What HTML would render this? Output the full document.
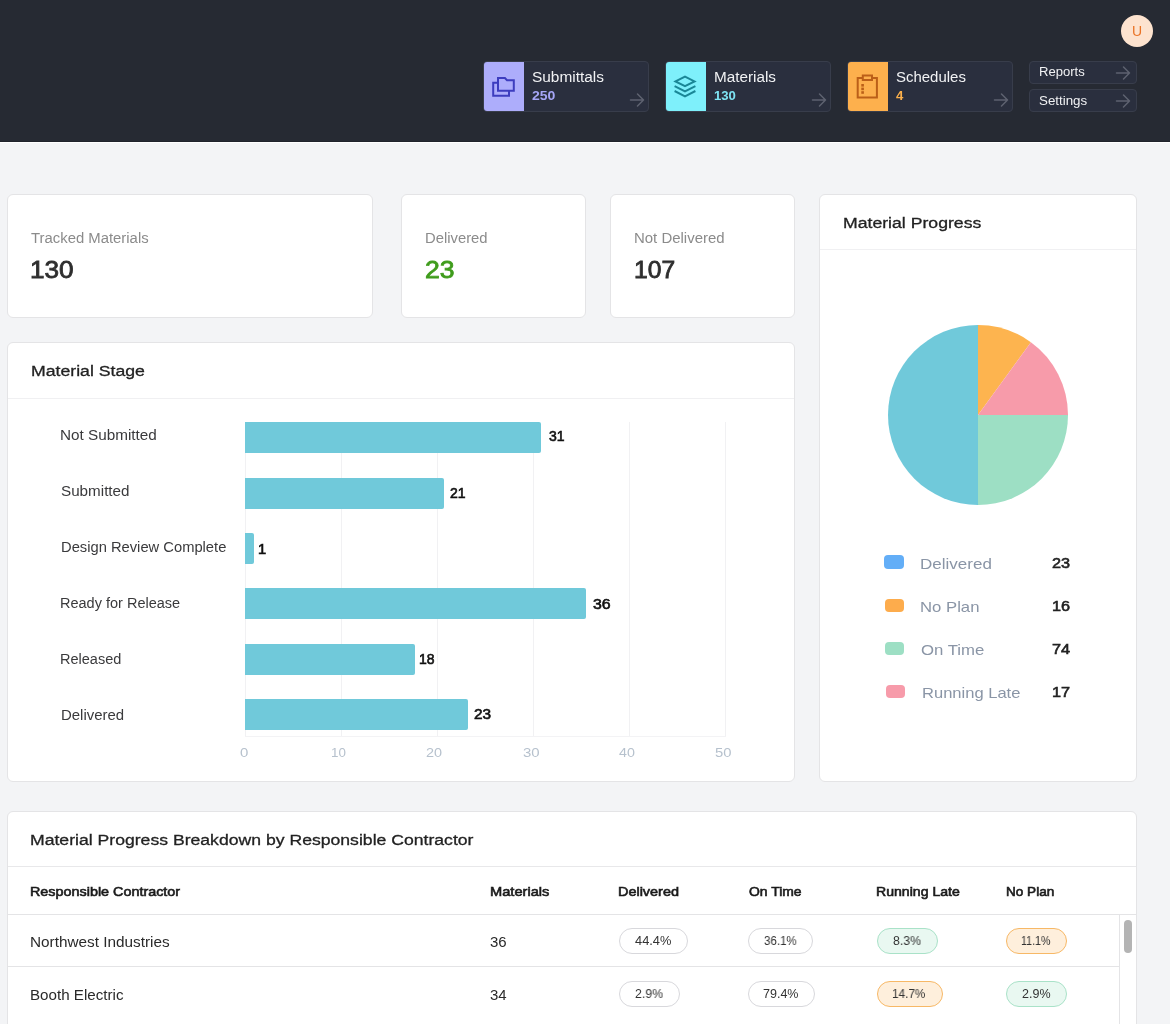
<!DOCTYPE html>
<html><head><meta charset="utf-8"><style>
html,body{margin:0;padding:0;}
body{width:1170px;height:1024px;overflow:hidden;position:relative;background:#f3f4f6;font-family:"Liberation Sans", sans-serif;}
.t{position:absolute;line-height:1;white-space:nowrap;will-change:transform;}
</style></head><body>
<div style="position:absolute;left:0px;top:0px;width:1170px;height:141px;box-sizing:border-box;background:#262a33;"></div>
<div style="position:absolute;left:0px;top:141px;width:1170px;height:1px;box-sizing:border-box;background:#20232b;"></div>
<div style="position:absolute;left:0px;top:142px;width:1170px;height:1px;box-sizing:border-box;background:#ffffff;"></div>
<div style="position:absolute;left:1121px;top:15px;width:32px;height:32px;box-sizing:border-box;background:#fde3cf;border-radius:50%;"></div>
<div id="t1" class="t" style="left:1137.00px;top:24.45px;font-size:14px;color:#ea7325;letter-spacing:0.000px;transform:translateX(-50%);">U</div>
<div style="position:absolute;left:483px;top:61px;width:166px;height:51px;box-sizing:border-box;background:#2a2f3e;border:1px solid #383d4b;border-radius:4px;"></div>
<div style="position:absolute;left:484px;top:62px;width:40px;height:49px;box-sizing:border-box;background:#adadfb;border-radius:3px 0 0 3px;"></div>
<svg style="position:absolute;left:484px;top:62px" width="40" height="49" viewBox="0 0 40 49"><path d="M14 16H20.9L23 18.2H29.8V28.7H14Z M14 20.7H9.2V33.7H25V28.7" fill="none" stroke="#3d3dbf" stroke-width="2" stroke-linejoin="miter"/></svg>
<div id="t2" class="t" style="left:531.94px;top:69.95px;font-size:14px;color:#f1f2f4;letter-spacing:0.000px;transform:scaleX(1.1007);transform-origin:0 0;">Submittals</div>
<div id="t3" class="t" style="left:531.63px;top:89.84px;font-size:12px;color:#a6a6f6;font-weight:700;letter-spacing:0.000px;transform:scaleX(1.1696);transform-origin:0 0;">250</div>
<svg style="position:absolute;left:629px;top:92px" width="16" height="16" viewBox="0 0 16 16"><path d="M1.5 8H14.5M8.5 2L14.5 8L8.5 14" fill="none" stroke="#5e6270" stroke-width="1.5" stroke-linecap="round" stroke-linejoin="round"/></svg>
<div style="position:absolute;left:665px;top:61px;width:166px;height:51px;box-sizing:border-box;background:#2a2f3e;border:1px solid #383d4b;border-radius:4px;"></div>
<div style="position:absolute;left:666px;top:62px;width:40px;height:49px;box-sizing:border-box;background:#7ef0fb;border-radius:3px 0 0 3px;"></div>
<svg style="position:absolute;left:666px;top:62px" width="40" height="49" viewBox="0 0 40 49"><path d="M9.5 19.4L19 14.7L28.5 19.4L19 24.1Z M8.6 24.1L19 29.4L29.4 24.1 M8.6 29L19 34.3L29.4 29" fill="none" stroke="#1a8797" stroke-width="2" stroke-linejoin="miter" stroke-linecap="butt"/></svg>
<div id="t4" class="t" style="left:713.65px;top:69.95px;font-size:14px;color:#f1f2f4;letter-spacing:0.000px;transform:scaleX(1.0919);transform-origin:0 0;">Materials</div>
<div id="t5" class="t" style="left:714.32px;top:89.84px;font-size:12px;color:#7ee4f3;font-weight:700;letter-spacing:0.000px;transform:scaleX(1.0933);transform-origin:0 0;">130</div>
<svg style="position:absolute;left:811px;top:92px" width="16" height="16" viewBox="0 0 16 16"><path d="M1.5 8H14.5M8.5 2L14.5 8L8.5 14" fill="none" stroke="#5e6270" stroke-width="1.5" stroke-linecap="round" stroke-linejoin="round"/></svg>
<div style="position:absolute;left:847px;top:61px;width:166px;height:51px;box-sizing:border-box;background:#2a2f3e;border:1px solid #383d4b;border-radius:4px;"></div>
<div style="position:absolute;left:848px;top:62px;width:40px;height:49px;box-sizing:border-box;background:#fdb04d;border-radius:3px 0 0 3px;"></div>
<svg style="position:absolute;left:848px;top:62px" width="40" height="49" viewBox="0 0 40 49"><path d="M9.7 16H28.9V35.6H9.7Z" fill="none" stroke="#bb5f18" stroke-width="2"/><path d="M14.8 13.6H24V18H14.8Z" fill="#fdb04d" stroke="#bb5f18" stroke-width="2"/><rect x="13.3" y="22" width="2.6" height="2.6" fill="#bb5f18"/><rect x="13.3" y="25.6" width="2.6" height="2.6" fill="#bb5f18"/><rect x="13.3" y="29.2" width="2.6" height="2.6" fill="#bb5f18"/></svg>
<div id="t6" class="t" style="left:896.16px;top:69.95px;font-size:14px;color:#f1f2f4;letter-spacing:0.000px;transform:scaleX(1.0689);transform-origin:0 0;">Schedules</div>
<div id="t7" class="t" style="left:896.35px;top:89.84px;font-size:12px;color:#fbb04b;font-weight:700;letter-spacing:0.000px;transform:scaleX(1.1000);transform-origin:0 0;">4</div>
<svg style="position:absolute;left:993px;top:92px" width="16" height="16" viewBox="0 0 16 16"><path d="M1.5 8H14.5M8.5 2L14.5 8L8.5 14" fill="none" stroke="#5e6270" stroke-width="1.5" stroke-linecap="round" stroke-linejoin="round"/></svg>
<div style="position:absolute;left:1029px;top:61px;width:108px;height:23px;box-sizing:border-box;background:#2a2f3e;border:1px solid #383d4b;border-radius:4px;"></div>
<div id="t8" class="t" style="left:1039.20px;top:66.42px;font-size:12.5px;color:#f1f2f4;letter-spacing:0.000px;transform:scaleX(1.0455);transform-origin:0 0;">Reports</div>
<svg style="position:absolute;left:1115px;top:64.7px" width="16" height="16" viewBox="0 0 16 16"><path d="M1.5 8H14.5M8.5 2L14.5 8L8.5 14" fill="none" stroke="#5e6270" stroke-width="1.5" stroke-linecap="round" stroke-linejoin="round"/></svg>
<div style="position:absolute;left:1029px;top:89px;width:108px;height:23px;box-sizing:border-box;background:#2a2f3e;border:1px solid #383d4b;border-radius:4px;"></div>
<div id="t9" class="t" style="left:1039.28px;top:95.32px;font-size:12.5px;color:#f1f2f4;letter-spacing:0.000px;transform:scaleX(1.0673);transform-origin:0 0;">Settings</div>
<svg style="position:absolute;left:1115px;top:92.7px" width="16" height="16" viewBox="0 0 16 16"><path d="M1.5 8H14.5M8.5 2L14.5 8L8.5 14" fill="none" stroke="#5e6270" stroke-width="1.5" stroke-linecap="round" stroke-linejoin="round"/></svg>
<div style="position:absolute;left:7px;top:194px;width:366px;height:124px;box-sizing:border-box;background:#fff;border:1px solid #e4e4e6;border-radius:6px;"></div>
<div id="t10" class="t" style="left:31.40px;top:231.25px;font-size:14px;color:#8b8b8b;letter-spacing:0.000px;transform:scaleX(1.0623);transform-origin:0 0;">Tracked Materials</div>
<div id="t11" class="t" style="left:29.92px;top:257.98px;font-size:24px;color:#2e2e2e;-webkit-text-stroke:0.8px #2e2e2e;letter-spacing:0.000px;transform:scaleX(1.0897);transform-origin:0 0;">130</div>
<div style="position:absolute;left:401px;top:194px;width:185px;height:124px;box-sizing:border-box;background:#fff;border:1px solid #e4e4e6;border-radius:6px;"></div>
<div id="t12" class="t" style="left:424.84px;top:231.25px;font-size:14px;color:#8b8b8b;letter-spacing:0.000px;transform:scaleX(1.0581);transform-origin:0 0;">Delivered</div>
<div id="t13" class="t" style="left:425.37px;top:257.98px;font-size:24px;color:#3f9c1c;-webkit-text-stroke:0.8px #3f9c1c;letter-spacing:0.000px;transform:scaleX(1.1059);transform-origin:0 0;">23</div>
<div style="position:absolute;left:610px;top:194px;width:185px;height:124px;box-sizing:border-box;background:#fff;border:1px solid #e4e4e6;border-radius:6px;"></div>
<div id="t14" class="t" style="left:633.76px;top:231.25px;font-size:14px;color:#8b8b8b;letter-spacing:0.000px;transform:scaleX(1.0679);transform-origin:0 0;">Not Delivered</div>
<div id="t15" class="t" style="left:634.32px;top:257.98px;font-size:24px;color:#2e2e2e;-webkit-text-stroke:0.8px #2e2e2e;letter-spacing:0.000px;transform:scaleX(1.0255);transform-origin:0 0;">107</div>
<div style="position:absolute;left:7px;top:342px;width:788px;height:440px;box-sizing:border-box;background:#fff;border:1px solid #e4e4e6;border-radius:6px;"></div>
<div style="position:absolute;left:8px;top:398px;width:786px;height:1px;box-sizing:border-box;background:#f0f0f2;"></div>
<div id="t16" class="t" style="left:30.67px;top:362.68px;font-size:15.5px;color:#222;-webkit-text-stroke:0.3px #222;letter-spacing:0.000px;transform:scaleX(1.1400);transform-origin:0 0;">Material Stage</div>
<div style="position:absolute;left:245px;top:422px;width:1px;height:315px;box-sizing:border-box;background:#f1f1f3;"></div>
<div id="t17" class="t" style="left:239.96px;top:745.80px;font-size:13px;color:#b6c1cd;letter-spacing:0.000px;transform:scaleX(1.1500);transform-origin:0 0;">0</div>
<div style="position:absolute;left:341px;top:422px;width:1px;height:315px;box-sizing:border-box;background:#f1f1f3;"></div>
<div id="t18" class="t" style="left:330.60px;top:745.80px;font-size:13px;color:#b6c1cd;letter-spacing:0.000px;transform:scaleX(1.0280);transform-origin:0 0;">10</div>
<div style="position:absolute;left:437px;top:422px;width:1px;height:315px;box-sizing:border-box;background:#f1f1f3;"></div>
<div id="t19" class="t" style="left:425.98px;top:745.80px;font-size:13px;color:#b6c1cd;letter-spacing:0.000px;transform:scaleX(1.1089);transform-origin:0 0;">20</div>
<div style="position:absolute;left:533px;top:422px;width:1px;height:315px;box-sizing:border-box;background:#f1f1f3;"></div>
<div id="t20" class="t" style="left:523.05px;top:745.80px;font-size:13px;color:#b6c1cd;letter-spacing:0.000px;transform:scaleX(1.1502);transform-origin:0 0;">30</div>
<div style="position:absolute;left:629px;top:422px;width:1px;height:315px;box-sizing:border-box;background:#f1f1f3;"></div>
<div id="t21" class="t" style="left:619.10px;top:745.80px;font-size:13px;color:#b6c1cd;letter-spacing:0.000px;transform:scaleX(1.0975);transform-origin:0 0;">40</div>
<div style="position:absolute;left:725px;top:422px;width:1px;height:315px;box-sizing:border-box;background:#f1f1f3;"></div>
<div id="t22" class="t" style="left:715.20px;top:745.80px;font-size:13px;color:#b6c1cd;letter-spacing:0.000px;transform:scaleX(1.1382);transform-origin:0 0;">50</div>
<div style="position:absolute;left:245px;top:736px;width:481px;height:1px;box-sizing:border-box;background:#f3f3f5;"></div>
<div style="position:absolute;left:245px;top:422px;width:296px;height:31px;box-sizing:border-box;background:#70c9da;border-radius:0 2px 2px 0;"></div>
<div style="position:absolute;left:245px;top:478px;width:199px;height:31px;box-sizing:border-box;background:#70c9da;border-radius:0 2px 2px 0;"></div>
<div style="position:absolute;left:245px;top:533px;width:9px;height:31px;box-sizing:border-box;background:#70c9da;border-radius:0 2px 2px 0;"></div>
<div style="position:absolute;left:245px;top:588px;width:341px;height:31px;box-sizing:border-box;background:#70c9da;border-radius:0 2px 2px 0;"></div>
<div style="position:absolute;left:245px;top:644px;width:170px;height:31px;box-sizing:border-box;background:#70c9da;border-radius:0 2px 2px 0;"></div>
<div style="position:absolute;left:245px;top:699px;width:223px;height:31px;box-sizing:border-box;background:#70c9da;border-radius:0 2px 2px 0;"></div>
<div id="t23" class="t" style="left:60.23px;top:428.15px;font-size:14px;color:#3a3a3c;letter-spacing:0.000px;transform:scaleX(1.0919);transform-origin:0 0;">Not Submitted</div>
<div id="t24" class="t" style="left:60.91px;top:483.95px;font-size:14px;color:#3a3a3c;letter-spacing:0.000px;transform:scaleX(1.0871);transform-origin:0 0;">Submitted</div>
<div id="t25" class="t" style="left:60.90px;top:540.15px;font-size:14px;color:#3a3a3c;letter-spacing:0.000px;transform:scaleX(1.0519);transform-origin:0 0;">Design Review Complete</div>
<div id="t26" class="t" style="left:60.17px;top:595.85px;font-size:14px;color:#3a3a3c;letter-spacing:0.000px;transform:scaleX(1.0364);transform-origin:0 0;">Ready for Release</div>
<div id="t27" class="t" style="left:60.17px;top:652.35px;font-size:14px;color:#3a3a3c;letter-spacing:0.000px;transform:scaleX(1.0371);transform-origin:0 0;">Released</div>
<div id="t28" class="t" style="left:60.63px;top:708.15px;font-size:14px;color:#3a3a3c;letter-spacing:0.000px;transform:scaleX(1.0682);transform-origin:0 0;">Delivered</div>
<div id="t29" class="t" style="left:549.07px;top:429.05px;font-size:14px;color:#111;-webkit-text-stroke:0.6px #111;letter-spacing:0.000px;">31</div>
<div id="t30" class="t" style="left:449.79px;top:486.05px;font-size:14px;color:#111;-webkit-text-stroke:0.6px #111;letter-spacing:0.000px;">21</div>
<div id="t31" class="t" style="left:258.16px;top:542.15px;font-size:14px;color:#111;-webkit-text-stroke:0.6px #111;letter-spacing:0.000px;transform:scaleX(1.0500);transform-origin:0 0;">1</div>
<div id="t32" class="t" style="left:593.00px;top:597.15px;font-size:14px;color:#111;-webkit-text-stroke:0.6px #111;letter-spacing:0.000px;transform:scaleX(1.1360);transform-origin:0 0;">36</div>
<div id="t33" class="t" style="left:418.63px;top:652.25px;font-size:14px;color:#111;-webkit-text-stroke:0.6px #111;letter-spacing:0.000px;">18</div>
<div id="t34" class="t" style="left:474.20px;top:707.15px;font-size:14px;color:#111;-webkit-text-stroke:0.6px #111;letter-spacing:0.000px;transform:scaleX(1.0980);transform-origin:0 0;">23</div>
<div style="position:absolute;left:819px;top:194px;width:318px;height:588px;box-sizing:border-box;background:#fff;border:1px solid #e4e4e6;border-radius:6px;"></div>
<div style="position:absolute;left:820px;top:249px;width:316px;height:1px;box-sizing:border-box;background:#f0f0f2;"></div>
<div id="t35" class="t" style="left:842.65px;top:214.68px;font-size:15.5px;color:#222;-webkit-text-stroke:0.3px #222;letter-spacing:0.000px;transform:scaleX(1.1388);transform-origin:0 0;">Material Progress</div>
<svg style="position:absolute;left:888px;top:325px" width="180" height="180" viewBox="-90 -90 180 180">
<path d="M0 0L0 -90A90 90 0 0 1 52.9 -72.8Z" fill="#fdb44f"/>
<path d="M0 0L52.9 -72.8A90 90 0 0 1 90 0Z" fill="#f79baa"/>
<path d="M0 0L90 0A90 90 0 0 1 0 90Z" fill="#9ddfc4"/>
<path d="M0 0L0 90A90 90 0 0 1 0 -90Z" fill="#70c9da"/>
</svg>
<div style="position:absolute;left:884.3px;top:555.4px;width:19.6px;height:13.8px;background:#63aef7;border-radius:4px;"></div>
<div id="t36" class="t" style="left:919.51px;top:555.60px;font-size:15px;color:#8a95a6;letter-spacing:0.000px;transform:scaleX(1.1337);transform-origin:0 0;">Delivered</div>
<div id="t37" class="t" style="left:1051.72px;top:555.18px;font-size:15.5px;color:#222;-webkit-text-stroke:0.6px #222;letter-spacing:0.000px;transform:scaleX(1.0500);transform-origin:0 0;">23</div>
<div style="position:absolute;left:884.9px;top:598.5px;width:19.6px;height:13.8px;background:#fdac4c;border-radius:4px;"></div>
<div id="t38" class="t" style="left:920.41px;top:598.70px;font-size:15px;color:#8a95a6;letter-spacing:0.000px;transform:scaleX(1.1136);transform-origin:0 0;">No Plan</div>
<div id="t39" class="t" style="left:1051.80px;top:598.28px;font-size:15.5px;color:#222;-webkit-text-stroke:0.6px #222;letter-spacing:0.000px;transform:scaleX(1.0500);transform-origin:0 0;">16</div>
<div style="position:absolute;left:884.6px;top:641.5px;width:19.6px;height:13.8px;background:#9ddfc4;border-radius:4px;"></div>
<div id="t40" class="t" style="left:920.90px;top:641.70px;font-size:15px;color:#8a95a6;letter-spacing:0.000px;transform:scaleX(1.1166);transform-origin:0 0;">On Time</div>
<div id="t41" class="t" style="left:1051.60px;top:641.28px;font-size:15.5px;color:#222;-webkit-text-stroke:0.6px #222;letter-spacing:0.000px;transform:scaleX(1.0500);transform-origin:0 0;">74</div>
<div style="position:absolute;left:885.5px;top:684.7px;width:19.6px;height:13.8px;background:#f79baa;border-radius:4px;"></div>
<div id="t42" class="t" style="left:921.96px;top:684.90px;font-size:15px;color:#8a95a6;letter-spacing:0.000px;transform:scaleX(1.1022);transform-origin:0 0;">Running Late</div>
<div id="t43" class="t" style="left:1052.20px;top:684.48px;font-size:15.5px;color:#222;-webkit-text-stroke:0.6px #222;letter-spacing:0.000px;transform:scaleX(1.0500);transform-origin:0 0;">17</div>
<div style="position:absolute;left:7px;top:811px;width:1130px;height:260px;box-sizing:border-box;background:#fff;border:1px solid #e4e4e6;border-radius:6px;"></div>
<div style="position:absolute;left:8px;top:866px;width:1128px;height:1px;box-sizing:border-box;background:#e8e8ea;"></div>
<div id="t44" class="t" style="left:30.28px;top:832.08px;font-size:15.5px;color:#222;-webkit-text-stroke:0.3px #222;letter-spacing:0.000px;transform:scaleX(1.1363);transform-origin:0 0;">Material Progress Breakdown by Responsible Contractor</div>
<div id="t45" class="t" style="left:30.15px;top:885.20px;font-size:13px;color:#1a1a1a;-webkit-text-stroke:0.6px #1a1a1a;letter-spacing:0.000px;transform:scaleX(1.1051);transform-origin:0 0;">Responsible Contractor</div>
<div id="t46" class="t" style="left:489.66px;top:885.20px;font-size:13px;color:#1a1a1a;-webkit-text-stroke:0.6px #1a1a1a;letter-spacing:0.000px;transform:scaleX(1.1263);transform-origin:0 0;">Materials</div>
<div id="t47" class="t" style="left:618.34px;top:885.20px;font-size:13px;color:#1a1a1a;-webkit-text-stroke:0.6px #1a1a1a;letter-spacing:0.000px;transform:scaleX(1.1100);transform-origin:0 0;">Delivered</div>
<div id="t48" class="t" style="left:748.73px;top:885.20px;font-size:13px;color:#1a1a1a;-webkit-text-stroke:0.6px #1a1a1a;letter-spacing:0.000px;transform:scaleX(1.0702);transform-origin:0 0;">On Time</div>
<div id="t49" class="t" style="left:876.20px;top:885.20px;font-size:13px;color:#1a1a1a;-webkit-text-stroke:0.6px #1a1a1a;letter-spacing:0.000px;transform:scaleX(1.0840);transform-origin:0 0;">Running Late</div>
<div id="t50" class="t" style="left:1006.29px;top:885.20px;font-size:13px;color:#1a1a1a;-webkit-text-stroke:0.6px #1a1a1a;letter-spacing:0.000px;transform:scaleX(1.0432);transform-origin:0 0;">No Plan</div>
<div style="position:absolute;left:8px;top:914px;width:1128px;height:1px;box-sizing:border-box;background:#e4e4e6;"></div>
<div style="position:absolute;left:8px;top:966px;width:1111px;height:1px;box-sizing:border-box;background:#e4e4e6;"></div>
<div style="position:absolute;left:1119px;top:915px;width:1px;height:120px;box-sizing:border-box;background:#e4e4e6;"></div>
<div style="position:absolute;left:1124px;top:920px;width:8px;height:33px;box-sizing:border-box;background:#b4b4b4;border-radius:4px;"></div>
<div id="t51" class="t" style="left:29.66px;top:935.35px;font-size:14px;color:#2a2a2a;letter-spacing:0.000px;transform:scaleX(1.0944);transform-origin:0 0;">Northwest Industries</div>
<div id="t52" class="t" style="left:490.00px;top:935.35px;font-size:14px;color:#2a2a2a;letter-spacing:0.000px;transform:scaleX(1.0700);transform-origin:0 0;">36</div>
<div style="position:absolute;left:619px;top:927.9px;width:68.7px;height:26px;box-sizing:border-box;border-radius:13px;background:#fff;border:1px solid #d8d8dc;"></div>
<div id="t53" class="t" style="left:635.40px;top:935.12px;font-size:12.5px;color:#333;letter-spacing:0.000px;transform:scaleX(1.0253);transform-origin:0 0;">44.4%</div>
<div style="position:absolute;left:748.2px;top:927.9px;width:64.5px;height:26px;box-sizing:border-box;border-radius:13px;background:#fff;border:1px solid #d8d8dc;"></div>
<div id="t54" class="t" style="left:763.53px;top:935.12px;font-size:12.5px;color:#333;letter-spacing:0.000px;transform:scaleX(0.9214);transform-origin:0 0;">36.1%</div>
<div style="position:absolute;left:877.1px;top:927.9px;width:60.6px;height:26px;box-sizing:border-box;border-radius:13px;background:#e9f8f1;border:1px solid #a9e2c8;"></div>
<div id="t55" class="t" style="left:893.41px;top:935.12px;font-size:12.5px;color:#333;letter-spacing:0.000px;transform:scaleX(0.9786);transform-origin:0 0;">8.3%</div>
<div style="position:absolute;left:1006px;top:927.9px;width:60.9px;height:26px;box-sizing:border-box;border-radius:13px;background:#feefdc;border:1px solid #f7b866;"></div>
<div id="t56" class="t" style="left:1021.44px;top:935.12px;font-size:12.5px;color:#333;letter-spacing:0.000px;transform:scaleX(0.8500);transform-origin:0 0;">11.1%</div>
<div id="t57" class="t" style="left:29.67px;top:988.15px;font-size:14px;color:#2a2a2a;letter-spacing:0.000px;transform:scaleX(1.0831);transform-origin:0 0;">Booth Electric</div>
<div id="t58" class="t" style="left:490.00px;top:988.15px;font-size:14px;color:#2a2a2a;letter-spacing:0.000px;transform:scaleX(1.0700);transform-origin:0 0;">34</div>
<div style="position:absolute;left:619px;top:980.5px;width:61px;height:26px;box-sizing:border-box;border-radius:13px;background:#fff;border:1px solid #d8d8dc;"></div>
<div id="t59" class="t" style="left:635.40px;top:987.72px;font-size:12.5px;color:#333;letter-spacing:0.000px;transform:scaleX(0.9802);transform-origin:0 0;">2.9%</div>
<div style="position:absolute;left:748.2px;top:980.5px;width:67.3px;height:26px;box-sizing:border-box;border-radius:13px;background:#fff;border:1px solid #d8d8dc;"></div>
<div id="t60" class="t" style="left:763.18px;top:987.72px;font-size:12.5px;color:#333;letter-spacing:0.000px;transform:scaleX(0.9926);transform-origin:0 0;">79.4%</div>
<div style="position:absolute;left:877.1px;top:980.5px;width:65.9px;height:26px;box-sizing:border-box;border-radius:13px;background:#feefdc;border:1px solid #f7b866;"></div>
<div id="t61" class="t" style="left:892.00px;top:987.72px;font-size:12.5px;color:#333;letter-spacing:0.000px;transform:scaleX(0.9414);transform-origin:0 0;">14.7%</div>
<div style="position:absolute;left:1006px;top:980.5px;width:60.9px;height:26px;box-sizing:border-box;border-radius:13px;background:#e9f8f1;border:1px solid #a9e2c8;"></div>
<div id="t62" class="t" style="left:1021.63px;top:987.72px;font-size:12.5px;color:#333;letter-spacing:0.000px;transform:scaleX(0.9849);transform-origin:0 0;">2.9%</div>
</body></html>
